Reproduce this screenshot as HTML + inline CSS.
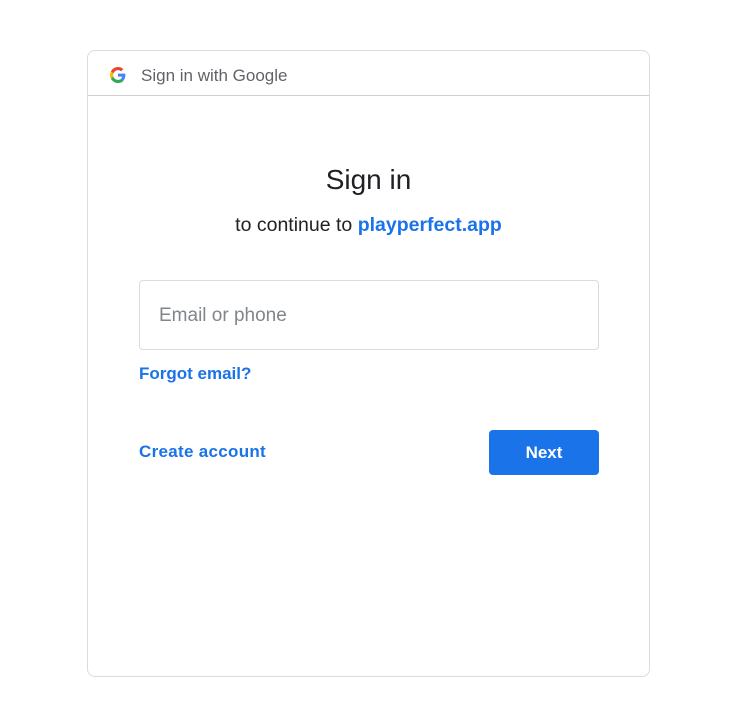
<!DOCTYPE html>
<html><head><style>
body{margin:0;width:737px;height:707px;background:#fff;font-family:"Liberation Sans",Arial,sans-serif;position:relative;overflow:hidden}
.card{position:absolute;left:87px;top:50px;width:563px;height:627px;border:1px solid #dadce0;border-radius:8px;box-sizing:border-box}
.hdr{position:absolute;left:0;top:0;width:100%;height:44px;border-bottom:1px solid #cfcfcf}
.hdr span{position:absolute;left:53px;top:15px;font-size:17px;color:#5f6368}
.g{position:absolute;left:22px;top:16px}
.t{position:absolute;width:100%;text-align:center}
.inp{position:absolute;left:51px;top:229px;width:460px;height:70px;border:1px solid #dadce0;border-radius:4px;box-sizing:border-box}
.inp span{position:absolute;left:19px;top:24px;font-size:19px;color:#80868b}
.lnk{position:absolute;color:#1a73e8;font-size:17px;font-weight:bold}
.btn{position:absolute;left:401px;top:379px;width:110px;height:45px;background:#1a73e8;border-radius:4px;color:#fff;font-weight:bold;font-size:17px;text-align:center;line-height:45px}
</style></head><body>
<div class="card">
<div class="hdr">
<svg class="g" width="16" height="16" viewBox="0 0 48 48"><path fill="#EA4335" d="M24 9.5c3.5 0 6.6 1.2 9.1 3.6l6.8-6.8C35.8 2.4 30.2 0 24 0 14.6 0 6.6 5.4 2.6 13.3l7.9 6.1C12.4 13.7 17.7 9.5 24 9.5z"/><path fill="#4285F4" d="M46.1 24.5c0-1.6-.1-3.1-.4-4.5H24v9h12.4c-.5 2.9-2.2 5.3-4.6 7l7.6 5.9c4.4-4.1 6.7-10.2 6.7-17.4z"/><path fill="#FBBC05" d="M10.5 28.6c-.5-1.4-.8-3-.8-4.6s.3-3.2.8-4.6l-7.9-6.1C.9 16.6 0 20.2 0 24s.9 7.4 2.6 10.7l7.9-6.1z"/><path fill="#34A853" d="M24 48c6.5 0 11.9-2.1 15.9-5.8l-7.6-5.9c-2.1 1.4-4.9 2.3-8.3 2.3-6.3 0-11.6-4.2-13.5-9.9l-7.9 6.1C6.6 42.6 14.6 48 24 48z"/></svg>
<span>Sign in with Google</span></div>
<div class="t" style="top:113px;font-size:28px;color:#202124">Sign in</div>
<div class="t" style="top:163px;font-size:19.5px;color:#202124">to continue to <span style="color:#1a73e8;font-weight:bold">playperfect.app</span></div>
<div class="inp"><span>Email or phone</span></div>
<div class="lnk" style="left:51px;top:313px">Forgot email?</div>
<div class="lnk" style="left:51px;top:391px;letter-spacing:0.3px">Create account</div>
<div class="btn">Next</div>
</div>
</body></html>
